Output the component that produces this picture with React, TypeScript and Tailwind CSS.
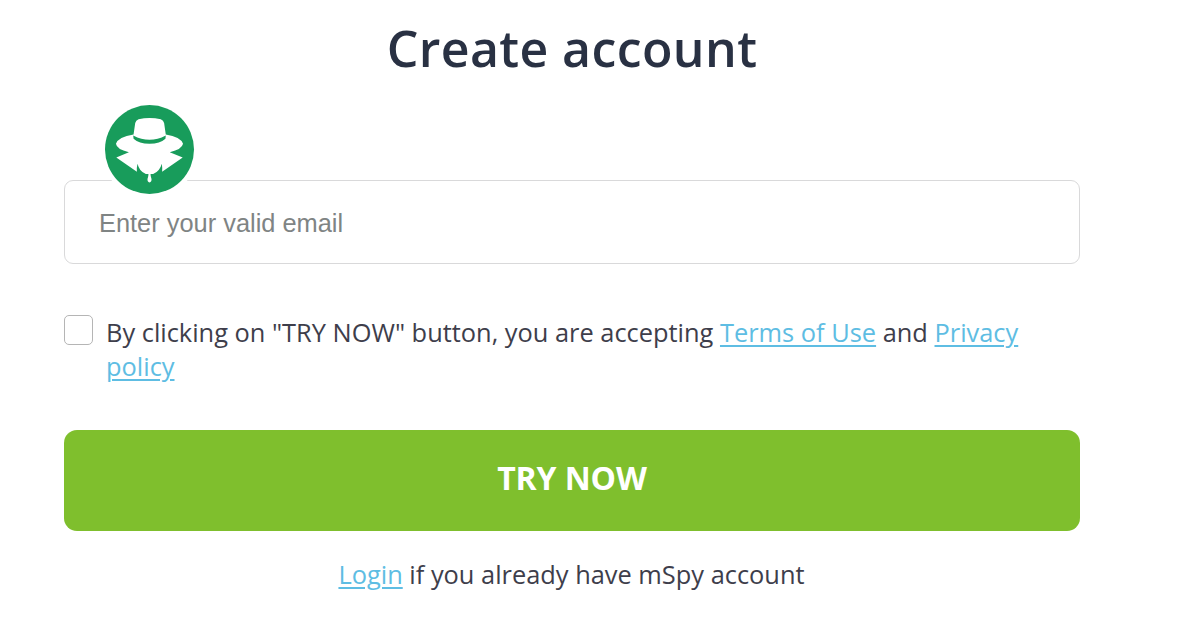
import { useState } from 'react'

const linkClass = 'text-[#5ebde3] underline decoration-2 underline-offset-[3px]'

function SpyBadge() {
  return (
    <svg viewBox="45 30 268 268" className="absolute left-[41px] -top-[75px] h-[89px] w-[89px] overflow-visible" aria-hidden="true">
      <circle cx="179" cy="164" r="147" fill="#fff" />
      <circle cx="179" cy="164" r="134" fill="#189c5b" />
      {/* hat and shoulders */}
      <path
        fill="#fff"
        d="M131 119 L136 84 Q138 76 146 73 Q179 65 213 73 Q221 76 223 84 L228 119 Q273 126 280 147 Q277 164 240 172 L279 188 L217 231 Q218 218 216 207 Q210 230 190 238 H168 Q148 230 143 207 Q140 218 141 231 L79 188 L117 172 Q80 164 78 147 Q85 126 131 119 Z"
      />
      {/* band */}
      <path fill="#189c5b" d="M130 122 Q179 148 228 122 L227 132 Q211 147 179 147 Q147 147 131 132 Z" />
      {/* drop */}
      <path fill="#fff" d="M176 236 H182 Q182 244 185 253 Q186 262 179 263 Q172 262 173 253 Q176 244 176 236 Z" />
    </svg>
  )
}

export default function App() {
  const [email, setEmail] = useState('')
  const [accepted, setAccepted] = useState(false)

  return (
    <main className="min-h-[619px] bg-white pl-16 font-['Open_Sans',sans-serif] text-[#3e3e4b]">
      <form className="flex w-[1016px] flex-col" onSubmit={(e) => e.preventDefault()}>
        <h1 className="mt-[16px] text-center text-[50px] leading-[64px] font-semibold tracking-[0.4px] whitespace-nowrap text-[#293143]">
          Create account
        </h1>

        <div className="relative mt-[100px]">
          <input
            type="email"
            value={email}
            onChange={(e) => setEmail(e.target.value)}
            placeholder="Enter your valid email"
            className="block h-[84px] w-full rounded-[9px] border border-[#d9d9da] px-[34px] pt-[3px] font-['Liberation_Sans',sans-serif] text-[25.4px] outline-none placeholder:text-[#7f8484]"
          />
          <SpyBadge />
        </div>

        <div className="mt-[51px] flex items-start">
          <input
            type="checkbox"
            aria-label="Accept terms"
            checked={accepted}
            onChange={(e) => setAccepted(e.target.checked)}
            className="h-[30px] w-[29px] shrink-0 appearance-none rounded-[5px] border border-[#b5b5b5] checked:bg-[#7fbf2d]"
          />
          <p className="ml-[13px] text-[25.4px] leading-[34px] whitespace-nowrap">
            By clicking on "TRY NOW" button, you are accepting{' '}
            <a href="#terms" className={linkClass}>Terms of Use</a> and{' '}
            <a href="#privacy" className={linkClass}>Privacy<br />policy</a>
          </p>
        </div>

        <button
          type="submit"
          className="mt-[47px] h-[101px] rounded-[13px] bg-[#7fbf2d] pb-[5px] text-[32px] font-bold tracking-[-0.1px] text-white"
        >
          TRY NOW
        </button>

        <p className="mt-[26px] -ml-px text-center text-[25.4px] leading-[35px]">
          <a href="#login" className={linkClass}>Login</a> if you already have mSpy account
        </p>
      </form>
    </main>
  )
}
